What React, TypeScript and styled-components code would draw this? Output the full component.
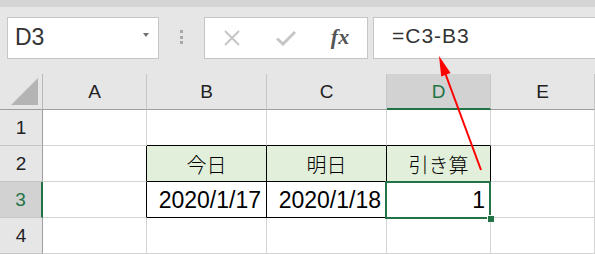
import styled, { createGlobalStyle } from "styled-components";

const GlobalStyle = createGlobalStyle`
  html, body {
    margin: 0;
    padding: 0;
    overflow: hidden;
    background: #e6e6e6;
  }
  * {
    box-sizing: border-box;
  }
`;

const GREEN = "#217346";
const GRID = "#d4d4d4";

const columns = ["A", "B", "C", "D", "E"];

type CellDef = {
  text?: string;
  align?: "left" | "center" | "right";
  jp?: boolean;
  fill?: string;
  rb?: string;
  bb?: string;
  selected?: boolean;
};

const BLACK = "#000";
const HEAD_FILL = "#e2efda";

const rows: CellDef[][] = [
  [{ rb: GRID }, { bb: BLACK }, { bb: BLACK }, { bb: BLACK }, {}],
  [
    { rb: BLACK },
    { text: "今日", align: "center", jp: true, fill: HEAD_FILL, rb: BLACK, bb: BLACK },
    { text: "明日", align: "center", jp: true, fill: HEAD_FILL, rb: BLACK, bb: BLACK },
    { text: "引き算", align: "center", jp: true, fill: HEAD_FILL, rb: BLACK, bb: BLACK },
    {},
  ],
  [
    { rb: BLACK },
    { text: "2020/1/17", align: "right", rb: BLACK, bb: BLACK },
    { text: "2020/1/18", align: "right", rb: BLACK, bb: BLACK },
    { text: "1", align: "right", rb: BLACK, bb: BLACK, selected: true },
    {},
  ],
  [{}, {}, {}, {}, {}],
];

const App = () => {
  return (
    <Page>
      <GlobalStyle />
      <TopStrip />
      <Toolbar>
        <NameBox>
          <NameText>D3</NameText>
          <DropArrow />
        </NameBox>
        <Grip>
          <Dot />
          <Dot />
          <Dot />
        </Grip>
        <FxGroup>
          <FxSlot>
            <svg width="18" height="18" viewBox="0 0 18 18">
              <path d="M2 2 L16 16 M16 2 L2 16" stroke="#c4c4c4" strokeWidth="1.8" fill="none" />
            </svg>
          </FxSlot>
          <FxSlot>
            <svg width="20" height="16" viewBox="0 0 20 16">
              <path d="M1 8.5 L7 14 L19 2" stroke="#c6c6c6" strokeWidth="3" fill="none" />
            </svg>
          </FxSlot>
          <FxSlot>
            <FxText>fx</FxText>
          </FxSlot>
        </FxGroup>
        <FormulaInput>=C3-B3</FormulaInput>
      </Toolbar>
      <Sheet>
        <Corner>
          <svg width="28" height="28" viewBox="0 0 28 28">
            <polygon points="27,0 27,27 0,27" fill="#b4b4b4" />
          </svg>
        </Corner>
        {columns.map((c) => (
          <ColHeader key={c} $active={c === "D"}>
            {c}
          </ColHeader>
        ))}
        {rows.map((row, r) => (
          <RowFragment key={r} index={r} row={row} />
        ))}
      </Sheet>
      <Arrow width="595" height="254" viewBox="0 0 595 254">
        <line x1="481" y1="170" x2="444" y2="70" stroke="#ff0000" strokeWidth="2" />
        <polygon points="439,56 450.6,73 441.2,76.5" fill="#ff0000" />
      </Arrow>
    </Page>
  );
};

const RowFragment = ({ index, row }: { index: number; row: CellDef[] }) => {
  return (
    <>
      <RowHeader $active={index === 2}>{index + 1}</RowHeader>
      {row.map((cell, i) => (
        <Cell
          key={i}
          $align={cell.align || "left"}
          $jp={!!cell.jp}
          $fill={cell.fill || "#fff"}
          $rb={cell.rb || GRID}
          $bb={cell.bb || GRID}
        >
          {cell.text}
          {cell.selected && (
            <Selection>
              <FillHandle />
            </Selection>
          )}
        </Cell>
      ))}
    </>
  );
};

export default App;

const Page = styled.div`
  position: relative;
  width: 595px;
  height: 254px;
  overflow: hidden;
  background: #e6e6e6;
  font-family: "Liberation Sans", "Noto Sans CJK JP", sans-serif;
`;

const TopStrip = styled.div`
  height: 7px;
  background: #d5d5d5;
`;

const Toolbar = styled.div`
  display: flex;
  align-items: flex-start;
  height: 67px;
  padding: 10px 0 0 7px;
`;

const NameBox = styled.div`
  display: flex;
  align-items: center;
  justify-content: space-between;
  width: 152px;
  height: 42px;
  padding: 0 9px 2px 7px;
  background: #fff;
  border: 1px solid #c6c6c6;
`;

const NameText = styled.span`
  font-size: 23px;
  color: #333;
`;

const DropArrow = styled.span`
  width: 0;
  height: 0;
  margin-bottom: 4px;
  border-left: 3.5px solid transparent;
  border-right: 3.5px solid transparent;
  border-top: 4px solid #707070;
`;

const Grip = styled.div`
  display: flex;
  flex-direction: column;
  gap: 2.5px;
  width: 3px;
  margin: 13px 21px 0 21px;
`;

const Dot = styled.span`
  width: 3px;
  height: 3px;
  background: #a8a8a8;
`;

const FxGroup = styled.div`
  display: flex;
  align-items: center;
  width: 164px;
  height: 42px;
  background: #fff;
  border: 1px solid #c6c6c6;
`;

const FxSlot = styled.div`
  display: flex;
  align-items: center;
  justify-content: center;
  width: 54px;
  height: 100%;
`;

const FxText = styled.span`
  font-family: "Liberation Serif", serif;
  font-style: italic;
  font-weight: bold;
  font-size: 22px;
  color: #555;
  margin-bottom: 3px;
`;

const FormulaInput = styled.div`
  flex: 1;
  height: 42px;
  margin-left: 5px;
  margin-right: -4px;
  padding: 6px 0 0 18px;
  background: #fff;
  border: 1px solid #c6c6c6;
  font-size: 21px;
  letter-spacing: 1px;
  color: #333;
`;

const Sheet = styled.div`
  display: grid;
  grid-template-columns: 43px 104px 120px 120px 104px 1fr;
  grid-auto-rows: 36px;
  background: #fff;
`;

const Corner = styled.div`
  display: flex;
  align-items: flex-end;
  justify-content: flex-end;
  padding: 0 3px 3px 0;
  background: #e6e6e6;
  border-right: 1px solid #b8b8b8;
  border-bottom: 1px solid #9e9e9e;
`;

const ColHeader = styled.div<{ $active: boolean }>`
  display: flex;
  align-items: center;
  justify-content: center;
  font-size: 19px;
  color: ${(p) => (p.$active ? GREEN : "#222")};
  background: ${(p) => (p.$active ? "#d2d2d2" : "#e6e6e6")};
  border-right: 1px solid #c6c6c6;
  border-bottom: ${(p) => (p.$active ? `2px solid ${GREEN}` : "1px solid #9e9e9e")};
  padding-top: ${(p) => (p.$active ? "1px" : "0")};
`;

const RowHeader = styled.div<{ $active: boolean }>`
  display: flex;
  align-items: center;
  justify-content: center;
  font-size: 19px;
  color: ${(p) => (p.$active ? GREEN : "#222")};
  background: ${(p) => (p.$active ? "#d2d2d2" : "#e6e6e6")};
  border-right: ${(p) => (p.$active ? `2px solid ${GREEN}` : "1px solid #9e9e9e")};
  border-bottom: 1px solid #c6c6c6;
`;

const Cell = styled.div<{
  $align: string;
  $jp: boolean;
  $fill: string;
  $rb: string;
  $bb: string;
}>`
  position: relative;
  display: flex;
  align-items: center;
  justify-content: ${(p) =>
    p.$align === "right" ? "flex-end" : p.$align === "center" ? "center" : "flex-start"};
  padding: 1px 5px 0 5px;
  font-family: ${(p) =>
    p.$jp ? `"Noto Sans CJK JP", sans-serif` : `"Liberation Sans", "Noto Sans CJK JP", sans-serif`};
  font-size: ${(p) => (p.$jp ? "20px" : "23px")};
  font-weight: ${(p) => (p.$jp ? 300 : 400)};
  color: #000;
  background: ${(p) => p.$fill};
  border-right: 1px solid ${(p) => p.$rb};
  border-bottom: 1px solid ${(p) => p.$bb};
`;

const Selection = styled.div`
  position: absolute;
  z-index: 2;
  top: -1px;
  left: -2px;
  right: -1px;
  bottom: -2px;
  border: 2px solid ${GREEN};
  pointer-events: none;
`;

const FillHandle = styled.span`
  position: absolute;
  right: -5px;
  bottom: -5px;
  width: 7px;
  height: 7px;
  background: ${GREEN};
  border-left: 1px solid #fff;
  border-top: 1px solid #fff;
`;

const Arrow = styled.svg`
  position: absolute;
  z-index: 3;
  left: 0;
  top: 0;
  pointer-events: none;
`;
